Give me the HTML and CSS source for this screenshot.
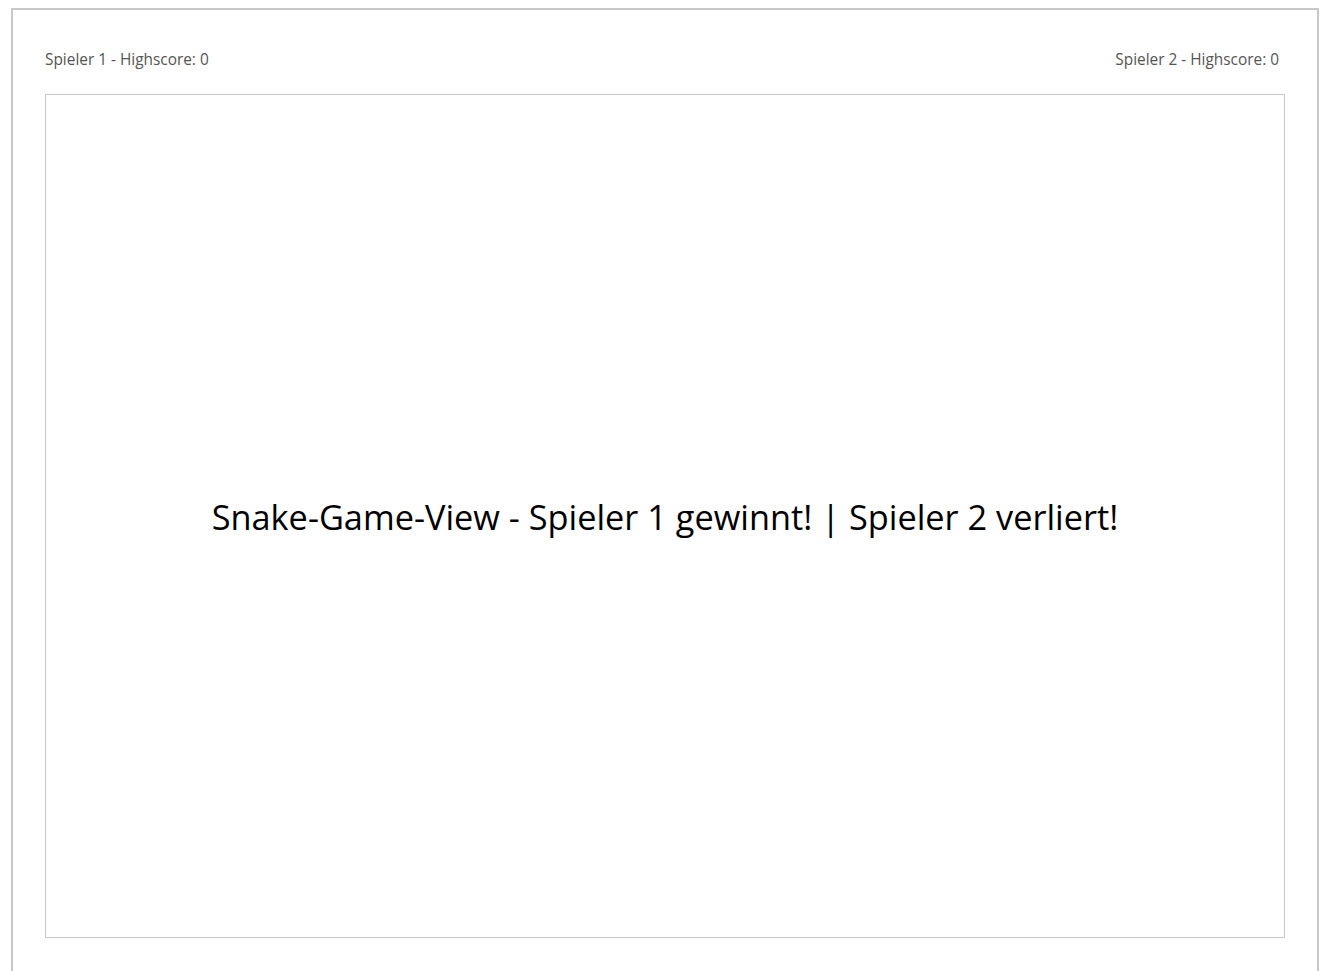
FILE: index.html
```html
<!DOCTYPE html>
<html lang="de">
<head>
<meta charset="utf-8">
<title>Snake Game</title>
<link rel="stylesheet" href="styles.css">
</head>
<body>
<div class="frame">
  <div class="scores">
    <span class="score">Spieler 1 - Highscore: 0</span>
    <span class="score">Spieler 2 - Highscore: 0</span>
  </div>
  <div class="board">
    <div class="message">Snake-Game-View - Spieler 1 gewinnt! | Spieler 2 verliert!</div>
  </div>
</div>
</body>
</html>
```

FILE: styles.css
```css
html, body {
  margin: 0;
  padding: 0;
  background: #ffffff;
}

body {
  font-family: "Open Sans", "Noto Sans", sans-serif;
  color: #000000;
}

.frame {
  box-sizing: border-box;
  margin: 8px 0 0 11px;
  width: 1308px;
  border: 2px solid #c8c8c8;
  padding: 32px 32px 48px 32px;
}

.scores {
  display: flex;
  justify-content: space-between;
  padding: 8px 6px 0 0;
  margin-bottom: 24px;
  height: 20px;
  line-height: 20px;
  font-size: 15.4px;
  color: #555555;
}

.board {
  box-sizing: border-box;
  height: 844px;
  border: 1px solid #c8c8c8;
  display: flex;
  align-items: center;
  justify-content: center;
}

.message {
  font-size: 34.3px;
  line-height: 44px;
  color: #000000;
  padding-top: 2px;
}
```
